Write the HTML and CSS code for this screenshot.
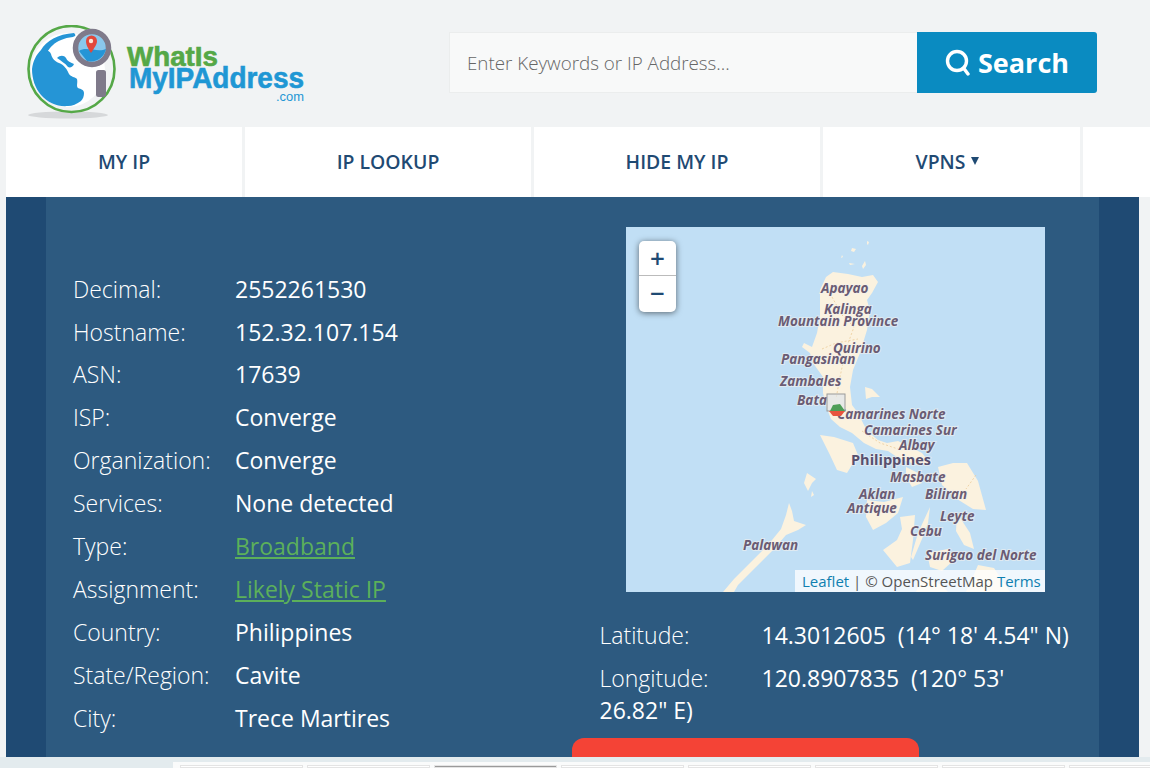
FILE: index.html
```html
<!DOCTYPE html>
<html lang="en">
<head>
    <meta charset="UTF-8">
    <meta name="viewport" content="width=device-width, initial-scale=1.0">
    <title>What Is My IP Address - IP Details</title>
    <link rel="stylesheet" href="styles.css">
</head>
<body>
    <header class="site-header">
        <a class="logo" href="#">
            <svg width="280" height="100" viewBox="0 0 280 100">
                <ellipse cx="42" cy="90" rx="40" ry="3.5" fill="#d6d8da"/>
                <circle cx="45.5" cy="44" r="43" fill="none" stroke="#55a847" stroke-width="2.6"/>
                <circle cx="42" cy="45" r="37" fill="#fff"/>
                <path d="M6 44 C7 36 10 30 15 25 C20 24 24 26 25 29 C26 33 28 36 33 38 C38 40 41 44 43 49 C45 52 49 52 51 54 C52 58 50 61 52 63 C55 64 58 65 58 68 C58 71 57 74 55 76 C51 79 46 81 42 81 C32 82 22 78 15 70 C9 63 6 54 6 44Z" fill="#2595d6"/>
                <path d="M15 25 C20 16 32 9 48 8 C50 10 50 11 47 12 C38 13 31 16 27 20 C24 22 23 25 21 27Z" fill="#2595d6"/>
                <path d="M31 33 C34 30 38 30 40 33 C41 36 44 37 48 39 C47 42 44 43 42 42 C39 38 35 36 31 33Z" fill="#2595d6"/>
                <circle cx="66" cy="23" r="19" fill="#f1f3f4"/>
                <circle cx="66" cy="23" r="16.5" fill="#8ac8ec" stroke="#7f7a8a" stroke-width="5.5"/>
                <path d="M53 26 C60 21 72 28 80 24 C78 33 70 38 61 36Z" fill="#2595d6"/>
                <path d="M65 28 C61 22 60 19 60 16 A5.5 5.5 0 0 1 71 16 C71 19 69 22 65 28Z" fill="#e2483a"/>
                <circle cx="65" cy="16" r="2.2" fill="#fde8d8"/>
                <rect x="70" y="45" width="10" height="27" rx="2.5" fill="#7f7a8a"/>
                <text class="logo-what" x="101" y="41" textLength="91" lengthAdjust="spacingAndGlyphs">WhatIs</text>
                <text class="logo-addr" x="103" y="63" textLength="175" lengthAdjust="spacingAndGlyphs">MyIPAddress</text>
                <text class="logo-com" x="250" y="76" textLength="28" lengthAdjust="spacingAndGlyphs">.com</text>
            </svg>
        </a>
        <form class="search-form">
            <input class="search-input" type="text" placeholder="Enter Keywords or IP Address...">
            <button class="search-btn" type="button">
                <svg width="26" height="27" viewBox="0 0 26 27" fill="none" stroke="#fff" stroke-width="3.4" stroke-linecap="round">
                    <circle cx="12" cy="12" r="9.5"/>
                    <path d="M18.5 19 L23 25"/>
                </svg>
                Search
            </button>
        </form>
    </header>

    <nav class="main-nav">
        <a class="nav-item nav-first" href="#">MY IP</a>
        <a class="nav-item" href="#">IP LOOKUP</a>
        <a class="nav-item" href="#">HIDE MY IP</a>
        <a class="nav-item nav-vpn" href="#">VPNS <span class="caret"></span></a>
        <span class="nav-item nav-last"></span>
    </nav>

    <main class="details-band">
        <div class="details-inner">
            <dl class="ip-info">
                <dt>Decimal:</dt><dd>2552261530</dd>
                <dt>Hostname:</dt><dd>152.32.107.154</dd>
                <dt>ASN:</dt><dd>17639</dd>
                <dt>ISP:</dt><dd>Converge</dd>
                <dt>Organization:</dt><dd>Converge</dd>
                <dt>Services:</dt><dd>None detected</dd>
                <dt>Type:</dt><dd><a href="#">Broadband</a></dd>
                <dt>Assignment:</dt><dd><a href="#">Likely Static IP</a></dd>
                <dt>Country:</dt><dd>Philippines</dd>
                <dt>State/Region:</dt><dd>Cavite</dd>
                <dt>City:</dt><dd>Trece Martires</dd>
            </dl>

            <div class="geo-col">
                <div class="map">
                    <svg class="map-art" width="419" height="365" viewBox="0 0 419 365">
                        <g class="map-land">
                            <!-- Luzon -->
                            <path d="M194 63 L200 50 L207 45 L222 47 L236 50 L247 48 L252 55 L246 66 L241 73 L244 84 L241 103 L234 126 L227 143 L224 160 L226 178 L232 186 L241 204 L252 213 L261 216 L272 214 L284 220 L296 226 L304 236 L292 238 L274 232 L262 224 L250 222 L238 216 L226 206 L214 200 L205 192 L201 182 L197 166 L197 150 L187 136 L184 126 L176 120 L178 116 L186 120 L191 106 L194 90Z"/>
                            <!-- Mindoro -->
                            <path d="M194 208 L208 210 L227 216 L232 228 L221 246 L211 243 L204 228Z"/>
                            <!-- Catanduanes, Babuyan -->
                            <path d="M239 160 L246 162 L254 170 L246 170 L240 172Z"/>
                            <path d="M226 21 L230 22 L228 25 L225 24Z"/>
                            <path d="M241 14 L243 15 L242 18 L241 17Z"/>
                            <path d="M239 34 L240 38 L237 42 L236 39Z"/>
                            <path d="M223 36 L229 37 L224 38Z"/>
                            <path d="M216 28 L217 30 L215 31Z"/>
                            <!-- Masbate, Samar -->
                            <path d="M280 240 L292 246 L296 256 L286 260 L280 250Z"/>
                            <path d="M312 240 L327 236 L341 236 L352 254 L360 283 L347 282 L331 272 L316 258Z"/>
                            <!-- Panay -->
                            <path d="M241 273 L258 275 L277 270 L272 286 L260 296 L247 303 L240 290Z"/>
                            <!-- Negros -->
                            <path d="M274 290 L289 288 L287 313 L284 336 L271 340 L257 323 L271 313 L276 302Z"/>
                            <!-- Cebu, Bohol, Leyte -->
                            <path d="M304 280 L302 296 L296 312 L287 333 L285 330 L292 306Z"/>
                            <path d="M301 326 L322 322 L328 333 L316 344 L304 340Z"/>
                            <path d="M331 286 L344 306 L348 322 L338 318 L330 304Z"/>
                            <!-- Mindanao -->
                            <path d="M352 338 L368 341 L378 356 L384 365 L340 365 L346 352Z"/>
                            <path d="M296 350 L316 358 L322 365 L290 365Z"/>
                            <!-- Palawan -->
                            <path d="M163 276 L166 284 L168 294 L180 298 L172 303 L160 308 L148 322 L130 340 L112 358 L108 365 L97 365 L108 352 L124 336 L142 318 L155 302 L160 288Z"/>
                            <path d="M181 246 L190 252 L186 256 L182 264 L178 256Z"/>
                            <path d="M186 264 L188 268 L185 270Z"/>
                        </g>
                        <g class="map-roads">
                            <path d="M206 70 L216 88 L228 100 L220 122 L214 150 L210 172"/>
                            <path d="M196 122 L210 116 L232 112"/>
                            <path d="M236 204 L254 216 L272 222"/>
                            <path d="M350 248 L340 262"/>
                        </g>
                        <g class="map-labels">
                            <text x="195" y="66">Apayao</text>
                            <text x="198" y="87">Kalinga</text>
                            <text x="152" y="99">Mountain Province</text>
                            <text x="207" y="126">Quirino</text>
                            <text x="155" y="137">Pangasinan</text>
                            <text x="154" y="159">Zambales</text>
                            <text x="171" y="178">Bata</text>
                            <text x="211" y="192">Camarines Norte</text>
                            <text x="238" y="208">Camarines Sur</text>
                            <text x="273" y="223">Albay</text>
                            <text class="map-country" x="225" y="238">Philippines</text>
                            <text x="264" y="255">Masbate</text>
                            <text x="233" y="272">Aklan</text>
                            <text x="299" y="272">Biliran</text>
                            <text x="221" y="286">Antique</text>
                            <text x="314" y="294">Leyte</text>
                            <text x="284" y="309">Cebu</text>
                            <text x="117" y="323">Palawan</text>
                            <text x="299" y="333">Surigao del Norte</text>
                        </g>
                        <rect x="201" y="167" width="18" height="17" fill="#dfe6ea" fill-opacity=".7" stroke="#9a9a9a"/>
                        <path d="M204 184 L207 178 L214 177 L219 184Z" fill="#4e9e58"/>
                        <path d="M203 184 H219 L215 189 H207Z" fill="#e8553e"/>
                    </svg>
                    <div class="zoom-ctl">
                        <a href="#">+</a>
                        <a href="#">&minus;</a>
                    </div>
                    <div class="attribution"><a href="#">Leaflet</a> | © OpenStreetMap <a class="terms" href="#">Terms</a></div>
                </div>
                <div class="geo-text">
                    <p><span class="geo-label">Latitude:</span><span class="geo-value">14.3012605&nbsp; (14° 18' 4.54" N)</span></p>
                    <p><span class="geo-label">Longitude:</span><span class="geo-value">120.8907835&nbsp; (120° 53' 26.82" E)</span></p>
                </div>
                <div class="red-btn"></div>
            </div>
        </div>
    </main>

    <div class="ad-strip">
        <div class="ad-row">
            <span class="ad-tile"></span>
            <span class="ad-tile"></span>
            <span class="ad-tile ad-dark"></span>
            <span class="ad-tile"></span>
            <span class="ad-tile"></span>
            <span class="ad-tile"></span>
            <span class="ad-tile"></span>
            <span class="ad-tile"></span>
        </div>
    </div>
</body>
</html>
```

FILE: styles.css
```css
* {
    margin: 0;
    padding: 0;
    box-sizing: border-box;
}

html, body {
    height: 768px;
    overflow: hidden;
}

body {
    font-family: "Open Sans", "Liberation Sans", sans-serif;
    background: #f1f3f4;
    color: #fff;
}

a {
    text-decoration: none;
}

.site-header {
    height: 127px;
    display: flex;
    padding: 25px 0 0 26px;
}

.logo {
    display: block;
    width: 280px;
    height: 100px;
}

.logo-what, .logo-addr {
    font-family: "Liberation Sans", sans-serif;
    font-weight: 700;
    stroke-width: 0.6px;
}

.logo-what {
    font-size: 27px;
    fill: #55a847;
    stroke: #55a847;
}

.logo-addr {
    font-size: 29px;
    fill: #1f97d4;
    stroke: #1f97d4;
}

.logo-com {
    font-family: "Liberation Sans", sans-serif;
    font-size: 12px;
    fill: #1f97d4;
}

.search-form {
    display: flex;
    margin: 7px 0 0 143px;
    height: 61px;
}

.search-input {
    width: 468px;
    height: 61px;
    border: 1px solid #ebeded;
    border-right: none;
    background: #f8f9f9;
    padding: 0 17px;
    font-family: "Open Sans", sans-serif;
    font-size: 18.8px;
    font-weight: 300;
    color: #666;
    outline: none;
}

.search-input::placeholder {
    color: #666;
    opacity: 1;
}

.search-btn {
    width: 180px;
    height: 61px;
    background: #0a8bc1;
    border: none;
    border-radius: 0 3px 3px 0;
    color: #fff;
    font-family: "Open Sans", sans-serif;
    font-size: 27px;
    font-weight: 700;
    display: flex;
    align-items: center;
    justify-content: center;
    gap: 7px;
    cursor: pointer;
}

.main-nav {
    margin-left: 6px;
    height: 70px;
    display: flex;
    gap: 3px;
}

.nav-item {
    background: #fff;
    width: 286px;
    height: 70px;
    padding-bottom: 2px;
    display: flex;
    align-items: center;
    justify-content: center;
    gap: 6px;
    font-size: 19.4px;
    font-weight: 600;
    color: #1f4a73;
}

.nav-first {
    width: 236px;
}

.nav-vpn {
    width: 257px;
    padding-right: 8px;
}

.nav-last {
    flex: 1;
}

.caret {
    width: 0;
    height: 0;
    border-left: 4.5px solid transparent;
    border-right: 4.5px solid transparent;
    border-top: 8px solid #1f4a73;
}

.details-band {
    margin-left: 6px;
    width: 1133px;
    height: 560px;
    padding: 0 40px;
    background: #1f4a73;
    overflow: hidden;
}

.details-inner {
    height: 560px;
    background: #2d5a80;
    display: flex;
    padding-left: 27px;
}

.ip-info {
    width: 499px;
    padding-top: 70.7px;
    display: grid;
    grid-template-columns: 162px 1fr;
    grid-auto-rows: 42.9px;
    align-content: start;
    font-size: 23px;
    line-height: 42.9px;
}

.ip-info dt {
    font-weight: 300;
}

.ip-info dd a {
    color: #5cb05a;
    text-decoration: underline;
}

.geo-col {
    width: 500px;
    padding-top: 30px;
}

.map {
    position: relative;
    margin-left: 54px;
    width: 419px;
    height: 365px;
    background: #c1dff5;
    overflow: hidden;
}

.map-art {
    display: block;
}

.map-land {
    filter: blur(0.6px);
}

.map-land path {
    fill: #fbf2df;
}

.map-roads path {
    fill: none;
    stroke: #eccb98;
    stroke-width: 0.8px;
    stroke-dasharray: 2 2;
}

.map-labels text {
    font-size: 13.5px;
    font-weight: 700;
    font-style: italic;
    fill: #6a5c74;
    stroke: #f4f1ee;
    stroke-width: 2px;
    stroke-opacity: 0.6;
    paint-order: stroke;
}

.map-labels .map-country {
    font-size: 14.5px;
    font-style: normal;
    fill: #57506e;
}

.zoom-ctl {
    position: absolute;
    left: 13px;
    top: 14px;
    width: 37px;
    height: 71px;
    background: #fff;
    border-radius: 5px;
    box-shadow: 0 1px 6px rgba(0, 0, 0, 0.55);
}

.zoom-ctl a {
    display: block;
    height: 35px;
    text-align: center;
    font-size: 26px;
    font-weight: 600;
    line-height: 34px;
    color: #1f4a73;
}

.zoom-ctl a:first-child {
    border-bottom: 1px solid #bbb;
}

.attribution {
    position: absolute;
    right: 0;
    bottom: 0;
    width: 250px;
    height: 22px;
    padding-left: 7px;
    background: rgba(255, 255, 255, 0.75);
    font-size: 15px;
    line-height: 22px;
    color: #555;
    white-space: nowrap;
}

.attribution a {
    color: #0f7fb0;
}

.geo-text {
    margin-top: 21.5px;
    padding-left: 27.5px;
    font-size: 23px;
    line-height: 42.9px;
}

.geo-label {
    display: inline-block;
    width: 162px;
    font-weight: 300;
}

.geo-text p:last-child {
    line-height: 32px;
    padding-top: 5.6px;
}

.red-btn {
    width: 347px;
    height: 60px;
    margin-top: 12px;
    background: #f44336;
    border-radius: 12px 12px 0 0;
}

.ad-strip {
    height: 11px;
    padding: 5px 0 0 173px;
    background: #e3ebee;
    overflow: hidden;
}

.ad-row {
    display: flex;
    gap: 4px;
    height: 6px;
    padding: 3px 0 0 7px;
    background: #fafbfb;
}

.ad-tile {
    flex: 0 0 123px;
    background: #fff;
    border: 1px solid #e4e4e4;
}

.ad-dark {
    background: #9a9a9a;
}
```
